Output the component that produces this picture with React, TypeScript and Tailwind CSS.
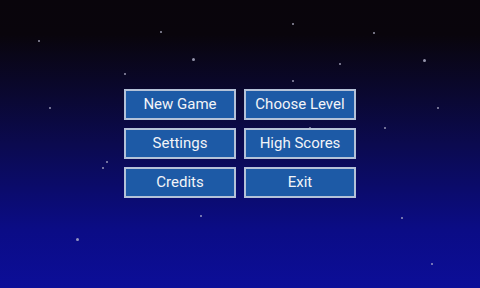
const stars = [
  [39, 41, 2], [161, 32, 2], [293, 24, 2], [374, 33, 2], [193, 59, 3], [340, 64, 2],
  [424, 60, 3], [125, 74, 2], [293, 81, 2], [50, 108, 2], [438, 108, 2], [310, 128, 2],
  [385, 128, 2], [107, 162, 2], [103, 168, 2], [201, 216, 2], [402, 218, 2], [77, 239, 3],
  [432, 264, 2],
];

const buttons = ['New Game', 'Choose Level', 'Settings', 'High Scores', 'Credits', 'Exit'];

export default function App() {
  return (
    <div className="relative flex h-[288px] w-[480px] items-center justify-center overflow-hidden bg-[linear-gradient(180deg,#09050b_0%,#09050c_12%,#0b0a4f_50%,#0b0c86_80%,#0c0e98_100%)] font-['Roboto',sans-serif]">
      {stars.map(([x, y, s], i) => (
        <span
          key={i}
          className="absolute rounded-full bg-[#b8b8d0] opacity-80"
          style={{ left: x - s / 2, top: y - s / 2, width: s, height: s }}
        />
      ))}
      <div className="relative mt-[-1px] grid grid-cols-[112px_112px] gap-x-2 gap-y-2">
        {buttons.map((label) => (
          <button
            key={label}
            className="flex h-[31px] items-center justify-center border-2 border-[#b4c2d8] bg-[#1d5aa6] text-[15px] leading-none text-[#f2f4f8]"
          >
            {label}
          </button>
        ))}
      </div>
    </div>
  );
}
